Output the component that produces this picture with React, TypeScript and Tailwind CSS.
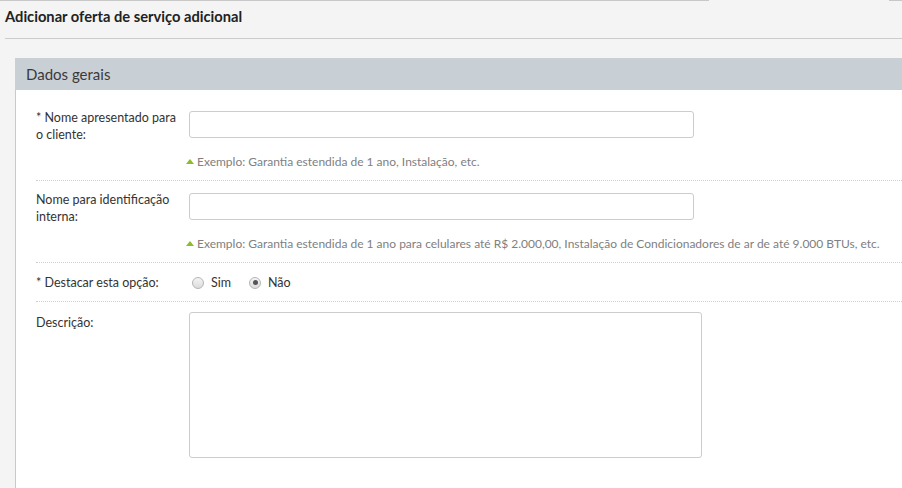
import React from "react";

const font = { fontFamily: "Lato, 'Open Sans', sans-serif" };

function Hint({ text }: { text: string }) {
    return (
        <div className="mt-[15px] flex items-center gap-[3px] text-[12px] leading-[17px] text-[#808080] -ml-[3px]">
            <span className="inline-block h-0 w-0 border-x-[4px] border-b-[5px] border-x-transparent border-b-[#8dbb2a]" />
            <span>{text}</span>
        </div>
    );
}

function Radio({ label, checked }: { label: string; checked?: boolean }) {
    return (
        <label className="flex items-center gap-[7px]">
            <span className="flex h-[12px] w-[12px] items-center justify-center rounded-full border border-[#b5b5b5] bg-gradient-to-b from-[#f4f4f4] to-[#dcdcdc]">
                {checked && <span className="h-[5px] w-[5px] rounded-full bg-[#555]" />}
            </span>
            <span>{label}</span>
        </label>
    );
}

export default function App() {
    return (
        <div style={font} className="h-[488px] w-[902px] overflow-hidden bg-[#f4f4f4] text-[12.5px] text-[#333]">
            <div className="flex h-px">
                <div className="w-[709px] bg-[#c8c8c8]" />
                <div className="flex-1" />
                <div className="w-[13px] bg-[#c8c8c8]" />
            </div>
            <h1 className="pl-[5px] pt-[5px] text-[14.7px] font-bold leading-5 text-[#222]">
                Adicionar oferta de serviço adicional
            </h1>
            <div className="ml-[5px] mt-[12px] h-px bg-[#cccccc]" />

            <div className="ml-[15px] mt-[19px]">
                <div className="flex h-[32px] items-center bg-[#c8cfd5] pl-[11px] text-[15px] text-[#3a3a3a]">
                    Dados gerais
                </div>
                <div className="border-l border-[#c9c9c9] bg-white pl-[20px]">
                    <div className="flex border-b border-dotted border-[#cfcfcf] pb-[10px] pt-[21px]">
                        <div className="-mt-[2px] w-[153px] pr-[8px] leading-[17px]">
                            * Nome apresentado para o cliente:
                        </div>
                        <div>
                            <input className="h-[27px] w-[505px] rounded-[3px] border border-[#cccccc] outline-none" />
                            <Hint text="Exemplo: Garantia estendida de 1 ano, Instalação, etc." />
                        </div>
                    </div>

                    <div className="flex border-b border-dotted border-[#cfcfcf] pb-[10px] pt-[12px]">
                        <div className="-mt-[2px] w-[153px] pr-[8px] leading-[17px]">
                            Nome para identificação interna:
                        </div>
                        <div>
                            <input className="h-[27px] w-[505px] rounded-[3px] border border-[#cccccc] outline-none" />
                            <Hint text="Exemplo: Garantia estendida de 1 ano para celulares até R$ 2.000,00, Instalação de Condicionadores de ar de até 9.000 BTUs, etc." />
                        </div>
                    </div>

                    <div className="flex border-b border-dotted border-[#cfcfcf] pb-[10px] pt-[11px] leading-[17px]">
                        <div className="w-[156px]">* Destacar esta opção:</div>
                        <div className="flex gap-[18px]">
                            <Radio label="Sim" />
                            <Radio label="Não" checked />
                        </div>
                    </div>

                    <div className="flex pt-[10px] pb-[40px]">
                        <div className="mt-[2px] w-[153px] leading-[17px]">Descrição:</div>
                        <textarea className="h-[146px] w-[513px] resize-none rounded-[3px] border border-[#cccccc] outline-none" />
                    </div>
                </div>
            </div>
        </div>
    );
}
